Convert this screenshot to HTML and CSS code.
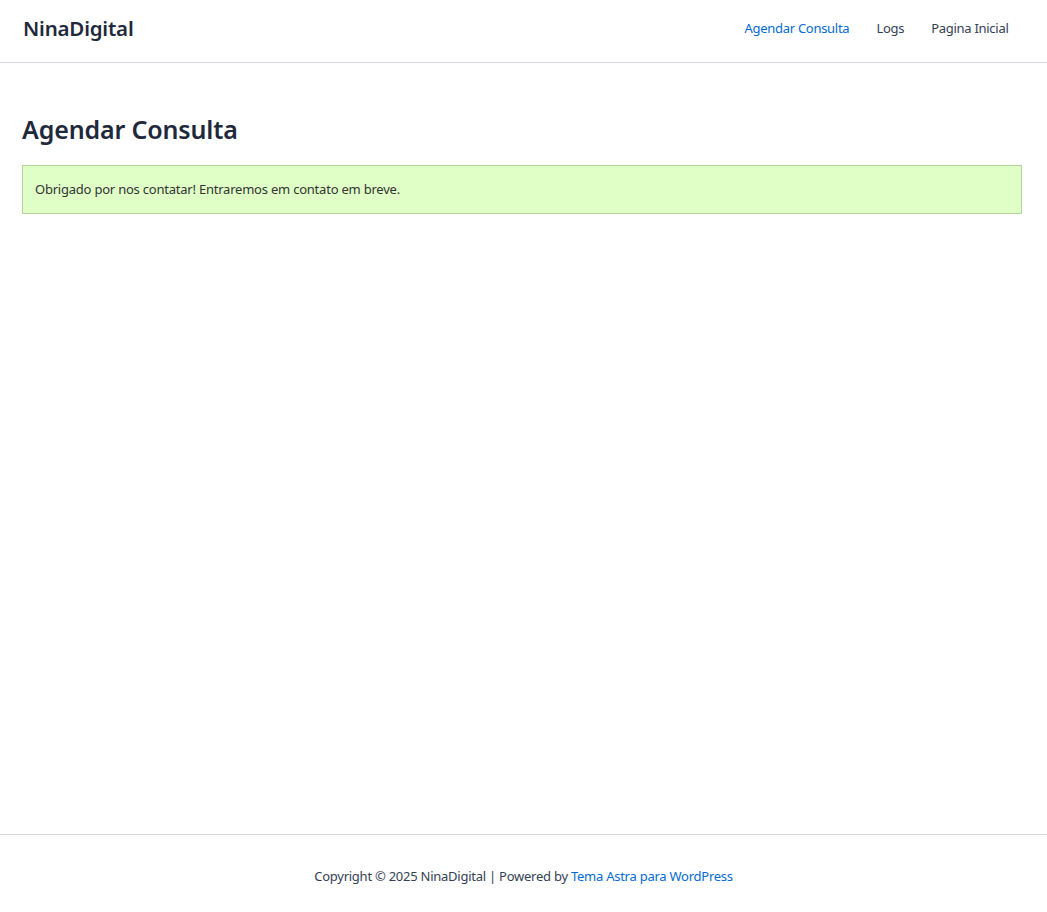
FILE: index.html
```html
<!DOCTYPE html>
<html lang="pt-BR">
<head>
<meta charset="utf-8">
<title>Agendar Consulta – NinaDigital</title>
<link rel="stylesheet" href="styles.css">
</head>
<body>
<header class="site-header">
  <a class="site-title" href="#">NinaDigital</a>
  <nav class="main-nav">
    <a class="nav-link current" href="#">Agendar Consulta</a>
    <a class="nav-link" href="#">Logs</a>
    <a class="nav-link" href="#">Pagina Inicial</a>
  </nav>
</header>
<main class="site-content">
  <h1 class="entry-title">Agendar Consulta</h1>
  <div class="confirmation">Obrigado por nos contatar! Entraremos em contato em breve.</div>
</main>
<footer class="site-footer">
  <p class="footer-text">Copyright © 2025 NinaDigital | Powered by <a href="#">Tema Astra para WordPress</a></p>
</footer>
</body>
</html>
```
FILE: styles.css
```css
* { box-sizing: border-box; }
html, body { margin: 0; padding: 0; }
body {
  font-family: "Noto Sans", "Open Sans", sans-serif;
  color: #334155;
  background: #fff;
  min-height: 100vh;
  display: flex;
  flex-direction: column;
}
a { text-decoration: none; }
.site-header {
  height: 63px;
  border-bottom: 1px solid #d6d6de;
  display: flex;
  align-items: center;
  justify-content: space-between;
  padding: 0 24px 7px 23px;
}
.site-title {
  font-size: 20.5px;
  font-weight: 600;
  color: #1e293b;
  letter-spacing: -0.2px;
  margin-top: 1px;
}
.main-nav {
  display: flex;
  margin-right: 1px;
}
.nav-link {
  font-size: 13px;
  color: #334155;
  padding: 0 13.5px;
  letter-spacing: -0.28px;
}
.nav-link.current { color: #046bd2; }
.site-content {
  flex: 1;
  padding: 50px 25px 0 22px;
}
.entry-title {
  margin: 0 0 19px;
  font-size: 25px;
  font-weight: 600;
  color: #1e293b;
  line-height: 1.3;
  letter-spacing: -0.15px;
}
.confirmation {
  background: #e0ffc7;
  border: 1px solid #b4d39b;
  padding: 15px 12px 16px;
  font-size: 13px;
  color: #333;
  line-height: 1.3;
  letter-spacing: -0.22px;
}
.site-footer {
  border-top: 1px solid #d6d6de;
  height: 78px;
  display: flex;
  align-items: center;
  justify-content: center;
}
.footer-text {
  margin: 4px 0 0;
  font-size: 13px;
  color: #334155;
  letter-spacing: -0.25px;
}
.footer-text a { color: #046bd2; }
```
